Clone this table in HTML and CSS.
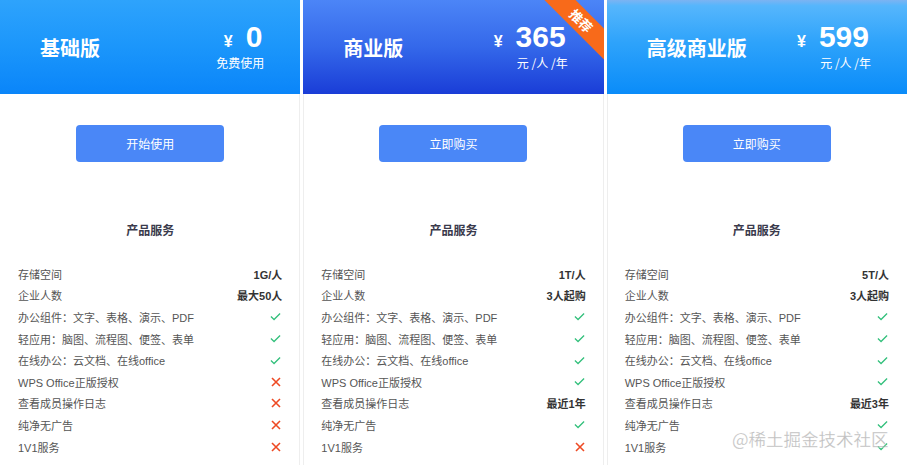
FILE: index.html
```html
<!DOCTYPE html>
<html lang="zh">
<head>
<meta charset="utf-8">
<title>Pricing</title>
<link rel="stylesheet" href="styles.css">
</head>
<body>
<div class="plans">
  <section class="card">
    <header class="head head-basic">
      <h2 class="title">基础版</h2>
      <div class="price">
        <div class="price-row"><span class="yen">¥</span><span class="num">0</span></div>
        <div class="unit">免费使用</div>
      </div>
    </header>
    <div class="body">
      <button class="btn">开始使用</button>
      <h3 class="svc">产品服务</h3>
      <ul class="rows">
        <li class="row"><span>存储空间</span><b>1G/人</b></li>
        <li class="row"><span>企业人数</span><b>最大50人</b></li>
        <li class="row"><span>办公组件：文字、表格、演示、PDF</span><svg class="ok" viewBox="0 0 12 9"><polyline points="1,4.6 4.4,7.8 11,1.2"/></svg></li>
        <li class="row"><span>轻应用：脑图、流程图、便签、表单</span><svg class="ok" viewBox="0 0 12 9"><polyline points="1,4.6 4.4,7.8 11,1.2"/></svg></li>
        <li class="row"><span>在线办公：云文档、在线office</span><svg class="ok" viewBox="0 0 12 9"><polyline points="1,4.6 4.4,7.8 11,1.2"/></svg></li>
        <li class="row"><span>WPS Office正版授权</span><svg class="no" viewBox="0 0 10 10"><path d="M1 1L9 9M9 1L1 9"/></svg></li>
        <li class="row"><span>查看成员操作日志</span><svg class="no" viewBox="0 0 10 10"><path d="M1 1L9 9M9 1L1 9"/></svg></li>
        <li class="row"><span>纯净无广告</span><svg class="no" viewBox="0 0 10 10"><path d="M1 1L9 9M9 1L1 9"/></svg></li>
        <li class="row"><span>1V1服务</span><svg class="no" viewBox="0 0 10 10"><path d="M1 1L9 9M9 1L1 9"/></svg></li>
      </ul>
    </div>
  </section>

  <section class="card">
    <header class="head head-biz">
      <h2 class="title">商业版</h2>
      <div class="price">
        <div class="price-row"><span class="yen">¥</span><span class="num">365</span></div>
        <div class="unit">元 /人 /年</div>
      </div>
      <div class="ribbon">推荐</div>
    </header>
    <div class="body">
      <button class="btn">立即购买</button>
      <h3 class="svc">产品服务</h3>
      <ul class="rows">
        <li class="row"><span>存储空间</span><b>1T/人</b></li>
        <li class="row"><span>企业人数</span><b>3人起购</b></li>
        <li class="row"><span>办公组件：文字、表格、演示、PDF</span><svg class="ok" viewBox="0 0 12 9"><polyline points="1,4.6 4.4,7.8 11,1.2"/></svg></li>
        <li class="row"><span>轻应用：脑图、流程图、便签、表单</span><svg class="ok" viewBox="0 0 12 9"><polyline points="1,4.6 4.4,7.8 11,1.2"/></svg></li>
        <li class="row"><span>在线办公：云文档、在线office</span><svg class="ok" viewBox="0 0 12 9"><polyline points="1,4.6 4.4,7.8 11,1.2"/></svg></li>
        <li class="row"><span>WPS Office正版授权</span><svg class="ok" viewBox="0 0 12 9"><polyline points="1,4.6 4.4,7.8 11,1.2"/></svg></li>
        <li class="row"><span>查看成员操作日志</span><b>最近1年</b></li>
        <li class="row"><span>纯净无广告</span><svg class="ok" viewBox="0 0 12 9"><polyline points="1,4.6 4.4,7.8 11,1.2"/></svg></li>
        <li class="row"><span>1V1服务</span><svg class="no" viewBox="0 0 10 10"><path d="M1 1L9 9M9 1L1 9"/></svg></li>
      </ul>
    </div>
  </section>

  <section class="card">
    <header class="head head-pro">
      <h2 class="title">高级商业版</h2>
      <div class="price">
        <div class="price-row"><span class="yen">¥</span><span class="num">599</span></div>
        <div class="unit">元 /人 /年</div>
      </div>
    </header>
    <div class="body">
      <button class="btn">立即购买</button>
      <h3 class="svc">产品服务</h3>
      <ul class="rows">
        <li class="row"><span>存储空间</span><b>5T/人</b></li>
        <li class="row"><span>企业人数</span><b>3人起购</b></li>
        <li class="row"><span>办公组件：文字、表格、演示、PDF</span><svg class="ok" viewBox="0 0 12 9"><polyline points="1,4.6 4.4,7.8 11,1.2"/></svg></li>
        <li class="row"><span>轻应用：脑图、流程图、便签、表单</span><svg class="ok" viewBox="0 0 12 9"><polyline points="1,4.6 4.4,7.8 11,1.2"/></svg></li>
        <li class="row"><span>在线办公：云文档、在线office</span><svg class="ok" viewBox="0 0 12 9"><polyline points="1,4.6 4.4,7.8 11,1.2"/></svg></li>
        <li class="row"><span>WPS Office正版授权</span><svg class="ok" viewBox="0 0 12 9"><polyline points="1,4.6 4.4,7.8 11,1.2"/></svg></li>
        <li class="row"><span>查看成员操作日志</span><b>最近3年</b></li>
        <li class="row"><span>纯净无广告</span><svg class="ok" viewBox="0 0 12 9"><polyline points="1,4.6 4.4,7.8 11,1.2"/></svg></li>
        <li class="row"><span>1V1服务</span><svg class="ok" viewBox="0 0 12 9"><polyline points="1,4.6 4.4,7.8 11,1.2"/></svg></li>
      </ul>
    </div>
  </section>
</div>
<div class="watermark">@稀土掘金技术社区</div>
</body>
</html>
```

FILE: styles.css
```css
* { box-sizing: border-box; }
html, body {
  margin: 0;
  padding: 0;
  background: #fff;
  overflow: hidden;
}
body {
  font-family: "Liberation Sans", "Noto Sans CJK SC", sans-serif;
  color: #333;
  position: relative;
  height: 465px;
}
.plans {
  display: grid;
  grid-template-columns: repeat(3, 1fr);
  column-gap: 3px;
}
.card {
  position: relative;
  overflow: hidden;
  background: #fff;
}
.head {
  position: relative;
  height: 94px;
  display: flex;
  align-items: center;
  justify-content: space-between;
  padding: 0 38px 0 40px;
  color: #fff;
}
.head-basic { background: linear-gradient(180deg, #2ea3fc 0%, #1b96fb 50%, #0a85f9 100%); }
.head-biz { background: linear-gradient(180deg, #4c85f7 0%, #3468ea 50%, #1a3dd7 100%); }
.head-pro { background: linear-gradient(180deg, #7cb3f2 0%, #56b6fc 6%, #2ea3fb 45%, #0a8cf9 100%); }
.title {
  margin: 0 0 -1px;
  font-family: "Noto Sans CJK SC", sans-serif;
  font-size: 20px;
  font-weight: 700;
  line-height: 1;
  letter-spacing: 0;
}
.price {
  display: flex;
  flex-direction: column;
  align-items: flex-end;
  margin-top: -1px;
}
.price-row {
  display: flex;
  align-items: baseline;
  height: 30px;
}
.yen {
  font-size: 16px;
  font-weight: 700;
  margin-right: 13px;
}
.num {
  font-size: 30px;
  font-weight: 700;
  line-height: 26px;
}
.unit {
  font-family: "Noto Sans CJK SC", sans-serif;
  font-size: 12px;
  line-height: 14px;
  margin-top: 2px;
  margin-right: -2px;
}
.ribbon {
  position: absolute;
  top: 10px;
  right: -29px;
  width: 104px;
  height: 22px;
  line-height: 22px;
  background: #f86a1a;
  color: #fff;
  font-family: "Noto Sans CJK SC", sans-serif;
  font-size: 13px;
  font-weight: 700;
  text-align: center;
  transform: rotate(45deg);
}
.body {
  display: flex;
  flex-direction: column;
  align-items: stretch;
  padding: 31px 18px 0 18px;
  box-shadow: inset 1px 0 0 #eeeeee, inset -1px 0 0 #eeeeee;
  height: 371px;
}
.card:first-child .body { box-shadow: inset -1px 0 0 #eeeeee; }
.card:last-child .body { box-shadow: inset 1px 0 0 #eeeeee; }
.btn {
  align-self: center;
  width: 148px;
  height: 37px;
  border: 0;
  border-radius: 4px;
  background: #4a87f7;
  color: #fff;
  font-family: "Noto Sans CJK SC", sans-serif;
  font-size: 12px;
  padding: 0;
}
.svc {
  margin: 59px 0 0;
  text-align: center;
  font-family: "Noto Sans CJK SC", sans-serif;
  font-size: 12px;
  font-weight: 700;
  line-height: 18px;
  color: #3a3a4c;
}
.rows {
  list-style: none;
  margin: 24px 0 0;
  padding: 0;
}
.row {
  display: flex;
  align-items: center;
  justify-content: space-between;
  height: 21.6px;
  font-size: 11px;
  color: #555;
}
.row span {
  font-family: "Liberation Sans", "Noto Sans CJK SC", sans-serif;
}
.row b {
  font-weight: 700;
  color: #333;
}
.ok {
  width: 11px;
  height: 9px;
  fill: none;
  stroke: #33c07c;
  stroke-width: 1.4;
  margin-right: 1px;
}
.no {
  width: 10px;
  height: 10px;
  fill: none;
  stroke: #ee4a24;
  stroke-width: 1.6;
  margin-right: 1px;
}
.watermark {
  position: absolute;
  left: 732px;
  top: 427px;
  font-family: "Noto Sans CJK SC", sans-serif;
  font-size: 17.5px;
  line-height: 24px;
  color: rgba(140, 140, 140, 0.55);
  -webkit-text-stroke: 0.3px rgba(255, 255, 255, 0.6);
  white-space: nowrap;
}
```
